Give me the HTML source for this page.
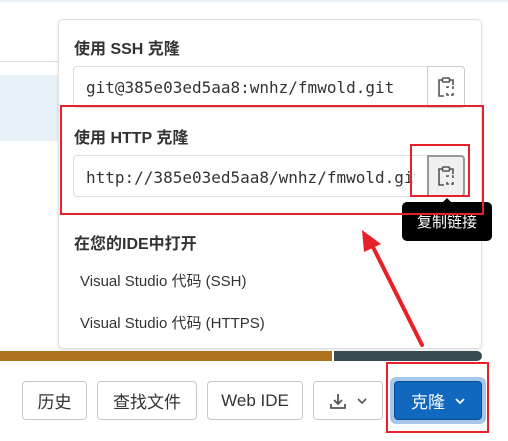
<!DOCTYPE html><html><head><style>
*{box-sizing:border-box;margin:0;padding:0}
body{width:508px;height:441px;background:#fff;position:relative;overflow:hidden;font-family:"Liberation Sans","Noto Sans CJK SC",sans-serif;color:#333}
.a{position:absolute}
.mono{font-family:"DejaVu Sans Mono","Liberation Mono",monospace;font-size:16px;color:#333}
.inp{border:1px solid #ddd;border-radius:4px;background:#fff}
.cb{border:1px solid #ccc;border-radius:0 4px 4px 0;background:#fff}
.btn{position:absolute;top:381px;height:39px;border:1px solid #c8c8c8;border-radius:4px;background:#fff;font-size:17px;color:#333;display:flex;align-items:center;justify-content:center}
.t{font-weight:bold;font-size:16px;color:#333}
</style></head><body>
<div class="a" style="left:0;top:0;width:508px;height:2px;background:#eaf2fa"></div>
<div class="a" style="left:0;top:61px;width:60px;height:1px;background:#ddd"></div>
<div class="a" style="left:0;top:75px;width:60px;height:66px;background:#e9f2fb"></div>
<div class="a" style="left:58px;top:19px;width:424px;height:330px;border:1px solid #e2e2e2;border-radius:5px;background:#fff;box-shadow:0 1px 3px rgba(0,0,0,.12)"></div>
<div class="a t" style="left:74px;top:35px">使用 SSH 克隆</div>
<div class="a inp" style="left:73px;top:66px;width:356px;height:42px"></div>
<div class="a mono" style="left:86px;top:78px">git@385e03ed5aa8:wnhz/fmwold.git</div>
<div class="a cb" style="left:427px;top:66px;width:38px;height:42px"></div>
<svg class="a" style="left:437px;top:76px" width="18" height="22" viewBox="0 0 18 22" fill="none" stroke="#555" stroke-width="1.6"><path d="M5 4H2v16h5M13 4h3v5"/><rect x="5.5" y="2" width="7" height="4" rx="1"/><path d="M10 12v-1h2M15 11h1v2M16 17v2h-2M10 17v2h2"/></svg>
<div class="a t" style="left:74px;top:124px">使用 HTTP 克隆</div>
<div class="a inp" style="left:73px;top:155px;width:356px;height:42px;overflow:hidden"><div class="mono" style="position:absolute;left:12px;top:12px;white-space:nowrap;width:329px;overflow:hidden">http://385e03ed5aa8/wnhz/fmwold.git</div></div>
<div class="a" style="left:427px;top:155px;width:38px;height:42px;border:2px solid #999;border-radius:0 4px 4px 0;background:#f0f0f0"></div>
<svg class="a" style="left:437px;top:165px" width="18" height="22" viewBox="0 0 18 22" fill="none" stroke="#555" stroke-width="1.6"><path d="M5 4H2v16h5M13 4h3v5"/><rect x="5.5" y="2" width="7" height="4" rx="1"/><path d="M10 12v-1h2M15 11h1v2M16 17v2h-2M10 17v2h2"/></svg>
<div class="a" style="left:59px;top:214px;width:422px;height:1px;background:#e6e6e6"></div>
<div class="a" style="left:442px;top:198px;width:0;height:0;border:5px solid transparent;border-bottom-color:#000;border-top:0"></div>
<div class="a" style="left:402px;top:202px;width:90px;height:39px;background:#000;border-radius:5px;color:#fff;font-size:15px;display:flex;align-items:center;justify-content:center">复制链接</div>
<div class="a t" style="left:74px;top:230px">在您的IDE中打开</div>
<div class="a" style="left:80px;top:270px;font-size:15px">Visual Studio 代码 (SSH)</div>
<div class="a" style="left:80px;top:312px;font-size:15px">Visual Studio 代码 (HTTPS)</div>
<div class="a" style="left:0;top:351px;width:332px;height:10px;background:#ad721c"></div>
<div class="a" style="left:334px;top:351px;width:148px;height:10px;background:#394b52;border-radius:0 5px 5px 0"></div>
<div class="btn" style="left:22px;width:65px">历史</div>
<div class="btn" style="left:97px;width:100px">查找文件</div>
<div class="btn" style="left:207px;width:96px">Web IDE</div>
<div class="btn" style="left:313px;width:70px;gap:10px"><svg width="18" height="18" viewBox="0 0 18 18" fill="none" stroke="#555" stroke-width="1.8"><path d="M9 2v10M5 8l4 4 4-4M2 12v4h14v-4"/></svg><svg width="10" height="6" viewBox="0 0 10 6" fill="none" stroke="#555" stroke-width="1.6"><path d="M1 1l4 4 4-4"/></svg></div>
<div class="a" style="left:390px;top:377px;width:96px;height:47px;border-radius:6px;background:#a7c7ea"></div>
<div class="a" style="left:394px;top:381px;width:88px;height:39px;border-radius:4px;background:#1068bf;border:1px solid #0b4f93;color:#fff;font-size:17px;display:flex;align-items:center;justify-content:center;gap:10px">克隆<svg width="10" height="6" viewBox="0 0 10 6" fill="none" stroke="#fff" stroke-width="1.8"><path d="M1 1l4 4 4-4"/></svg></div>
<div class="a" style="left:60px;top:105px;width:424px;height:110px;border:2px solid #e8202a"></div>
<div class="a" style="left:410px;top:144px;width:60px;height:53px;border:2px solid #e8202a"></div>
<div class="a" style="left:386px;top:362px;width:103px;height:71px;border:2px solid #e8202a"></div>
<svg class="a" style="left:0;top:0" width="508" height="441"><line x1="422" y1="345" x2="372" y2="245" stroke="#e8202a" stroke-width="4" stroke-linecap="round"/><polygon points="362,230 381,244 364,252" fill="#e8202a"/></svg>
</body></html>
